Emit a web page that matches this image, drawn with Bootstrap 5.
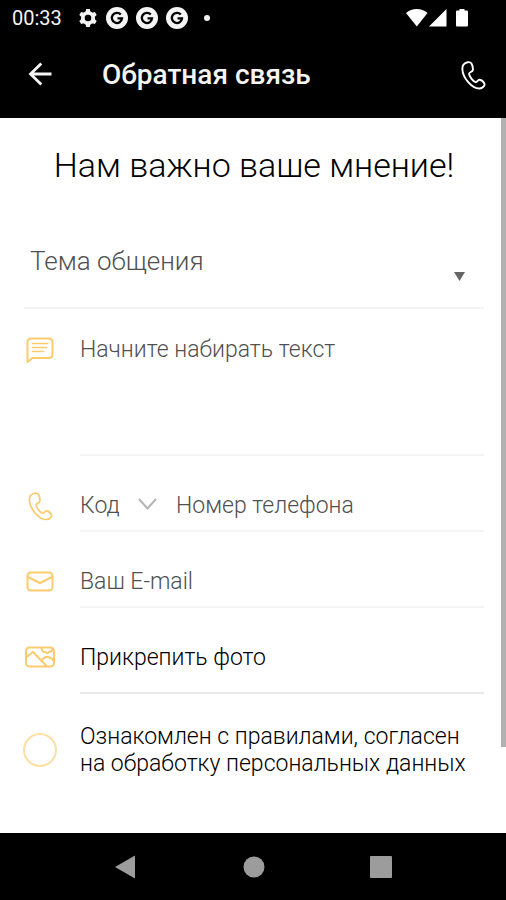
<!DOCTYPE html>
<html lang="ru">
<head>
<meta charset="utf-8">
<meta name="viewport" content="width=device-width, initial-scale=1">
<title>Обратная связь</title>
<link href="https://cdn.jsdelivr.net/npm/bootstrap@5.3.0/dist/css/bootstrap.min.css" rel="stylesheet">
<style>
  body { font-family: Roboto, "Noto Sans", sans-serif; font-size: 23px; font-weight: 300; line-height: 27px; color: #000; background: #fff; }
  svg { display: block; flex: none; }
  .status-bar { height: 36px; padding: 0 37px 0 12px; font-size: 20px; font-weight: 400; color: #f4f4f4; }
  .app-bar { height: 82px; padding: 0 20px 4px 27px; }
  .app-title { font-size: 28px; line-height: 32px; font-weight: 500; color: #f4f4f4; padding-left: 49px; }
  .form-area { padding: 0 22px 40px 24px; }
  .lead-title { font-size: 34px; line-height: 40px; font-weight: 300; padding: 27px 0 30px; }
  .field { border: 0; border-radius: 0; background: transparent; color: #505050; padding: 0; outline-offset: 2px; appearance: none; min-width: 0; font-weight: 300; }
  .field::placeholder { color: #505050; opacity: 1; }
  .topic { border-bottom: 2px solid #f4f4f4; }
  .topic .field { height: 92px; font-size: 26px; padding-left: 6px; }
  .topic-arrow { right: 19px; top: 57px; pointer-events: none; }
  .icon-cell { width: 56px; flex: none; color: #fbcb6c; }
  .line { border-bottom: 2px solid #f4f4f4; padding-top: 24px; }
  .line .field, .attach { height: 50px; }
  .message .line .field { height: 121px; resize: none; display: block; padding-top: 3px; }
  .message .icon-cell { padding-top: 28px; }
  .one-line .icon-cell { padding-top: 24px; }
  .code-box .field { width: 96px; }
  .code-arrow { left: 58px; top: 18px; pointer-events: none; }
  .attach-line { border-color: #eaeaea; padding-bottom: 10px; }
  .attach-icon { padding-bottom: 12px; }
  .consent { padding-top: 29px; }
  .consent-check { appearance: none; width: 34px; height: 34px; border: 2px solid #fddfa6; border-radius: 50%; margin: 0 23px 0 -1px; flex: none; }
  .consent-check:checked { background: #fbcf78; box-shadow: inset 0 0 0 5px #fff; }
  .scroll-thumb { top: 0; right: 0; width: 5px; height: 88%; background: #b1b1b1; }
  .nav-keys { height: 67px; padding: 0 114px 0 115px; }
</style>
<script src="https://cdn.jsdelivr.net/npm/bootstrap@5.3.0/dist/js/bootstrap.bundle.min.js"></script>
</head>
<body class="min-vh-100 d-flex flex-column">
<svg width="0" height="0" class="position-absolute" aria-hidden="true">
  <symbol id="handset" viewBox="0 0 24 29">
    <path d="M2 3.600C4 1.200 8.400.2 9.800 2.300c1.300 2.200 1.800 5.200 1.500 7-.3 1.500-3.600 2-3.700 3.400-.1 2.600 4 7.800 6.400 8.500 1.500.4 2.200-2.500 3.900-2.400 1.900.1 4.200 2.200 5 3.900.8 2-2 4.600-4.800 4.800C10.400 27.900 1.200 16.600.9 8.500.8 6.500 1 4.800 2 3.600z" fill="none" stroke="currentColor" stroke-linejoin="round"/>
  </symbol>
  <symbol id="g-badge" viewBox="0 0 22 22">
    <circle cx="11" cy="11" r="11" fill="#f4f4f4"/>
    <path d="M14.800 7.600A5.100 5.100 0 1 0 16 11.400h-4.500" fill="none" stroke="#000" stroke-width="2.300"/>
  </symbol>
</svg>

<header class="bg-black text-white">
  <div class="status-bar d-flex align-items-center">
    <span>00:33</span>
    <div class="d-flex align-items-center gap-2 ms-3">
      <svg width="20" height="20" viewBox="0 0 20 20" aria-hidden="true"><g fill="#f4f4f4"><path fill-rule="evenodd" d="M10 3a7 7 0 1 0 0 14 7 7 0 0 0 0-14zm0 3.700a3.300 3.300 0 1 1 0 6.600 3.300 3.300 0 0 1 0-6.600z"/><path id="tooth" d="M7.500 4.500 8.200 1h3.600l.7 3.500z"/><use href="#tooth" transform="rotate(60 10 10)"/><use href="#tooth" transform="rotate(120 10 10)"/><use href="#tooth" transform="rotate(180 10 10)"/><use href="#tooth" transform="rotate(240 10 10)"/><use href="#tooth" transform="rotate(300 10 10)"/></g></svg>
      <svg width="22" height="22" aria-hidden="true"><use href="#g-badge"/></svg>
      <svg width="22" height="22" aria-hidden="true"><use href="#g-badge"/></svg>
      <svg width="22" height="22" aria-hidden="true"><use href="#g-badge"/></svg>
      <svg class="ms-2" width="6" height="6" aria-hidden="true"><circle cx="3" cy="3" r="3" fill="#f4f4f4"/></svg>
    </div>
    <svg class="ms-auto" width="63" height="20" viewBox="0 0 63 20" fill="#fff" aria-hidden="true"><path d="M0 5C6-.5 15.500-.5 21.500 5L10.800 18.500zM40.500 1v17.500H23zM50 3.500q0-1 1-1h2.500V1h5v1.500H61q1 0 1 1v14q0 1-1 1H51q-1 0-1-1z"/></svg>
  </div>
  <div class="app-bar d-flex align-items-center">
    <button type="button" class="btn p-0 border-0 text-white" aria-label="Назад">
      <svg width="26" height="26" viewBox="0 0 26 26"><path d="M24.500 12H4M14.300 1.500 3.500 12l10.800 10.500" fill="none" stroke="#f4f4f4" stroke-width="2.800"/></svg>
    </button>
    <h1 class="app-title mb-0">Обратная связь</h1>
    <button type="button" class="btn p-0 border-0 text-white ms-auto" aria-label="Позвонить">
      <svg width="25" height="29" stroke-width="1.900"><use href="#handset"/></svg>
    </button>
  </div>
</header>

<main class="position-relative flex-grow-1">
  <form class="form-area">
    <h2 class="lead-title text-center mb-0 text-black">Нам важно ваше мнение!</h2>

    <div class="topic position-relative">
      <select class="field w-100 d-block" aria-label="Тема общения"><option>Тема общения</option></select>
      <svg class="topic-arrow position-absolute" width="11" height="9" aria-hidden="true"><path d="M0 0h11L5.500 9z" fill="#666"/></svg>
    </div>

    <div class="message d-flex">
      <label class="icon-cell" for="message" aria-label="Текст сообщения">
        <svg width="32" height="27" viewBox="0 0 32 27" fill="none" stroke="currentColor" stroke-width="2" stroke-linecap="round" stroke-linejoin="round"><path d="M3.500 25V5.500q0-4 4-4h17q4 0 4 4v11.500q0 4-4 4H8.500z"/><path d="M8.500 6.500h15M8.500 10.500h14M8.500 14.500h11" stroke-width="1.700"/></svg>
      </label>
      <div class="line flex-grow-1"><textarea class="field w-100" id="message" placeholder="Начните набирать текст"></textarea></div>
    </div>

    <div class="one-line d-flex">
      <label class="icon-cell d-flex align-items-center" for="phone" aria-label="Телефон">
        <svg class="ms-1" width="25" height="29" stroke-width="1.700"><use href="#handset"/></svg>
      </label>
      <div class="line d-flex flex-grow-1">
        <div class="code-box position-relative">
          <select class="field" aria-label="Код"><option>Код</option></select>
          <svg class="code-arrow position-absolute" width="19" height="13" aria-hidden="true"><path d="M1 1l8.500 9.500L18 1" fill="none" stroke="#b4b4b4" stroke-width="2"/></svg>
        </div>
        <input class="field flex-grow-1" id="phone" type="tel" placeholder="Номер телефона">
      </div>
    </div>

    <div class="one-line d-flex">
      <label class="icon-cell d-flex align-items-center" for="email" aria-label="E-mail">
        <svg width="32" height="22" viewBox="0 0 32 22" fill="none" stroke="currentColor" stroke-width="2" stroke-linejoin="round"><rect x="3.500" y="1.500" width="25" height="18" rx="3.500"/><path d="M4 6l12 6 12-6"/></svg>
      </label>
      <div class="line flex-grow-1"><input class="field w-100 d-block" id="email" type="email" placeholder="Ваш E-mail"></div>
    </div>

    <div class="one-line d-flex">
      <div class="icon-cell attach-icon d-flex align-items-center">
        <svg width="32" height="22" viewBox="0 0 32 22" fill="none" stroke="currentColor" stroke-width="2" stroke-linejoin="round" aria-hidden="true"><rect x="2" y="1.500" width="28" height="19" rx="3.500"/><path d="M2 11.500 9 6l13.500 14M17.500 14q4.500-4.500 8-2.500 3.500 1 4.500 4M17.500 2q.5 4.500 4 4 2 2.500 4-.5 3 .5 3-3"/></svg>
      </div>
      <div class="line attach-line flex-grow-1">
        <button type="button" class="field attach w-100 text-start text-black d-block">Прикрепить фото</button>
      </div>
    </div>

    <div class="consent d-flex align-items-center">
      <input class="consent-check" type="checkbox" id="agree">
      <label for="agree">Ознакомлен с правилами, согласен на обработку персональных данных</label>
    </div>
  </form>
  <div class="scroll-thumb position-absolute"></div>
</main>

<footer class="nav-keys bg-black d-flex justify-content-between align-items-center">
  <button type="button" class="btn p-0 border-0" aria-label="Назад"><svg width="22" height="24"><path d="M0 12 20 .5v23z" fill="#9c9c9c"/></svg></button>
  <button type="button" class="btn p-0 border-0" aria-label="Домой"><svg width="22" height="22"><circle cx="11" cy="11" r="10.500" fill="#9c9c9c"/></svg></button>
  <button type="button" class="btn p-0 border-0" aria-label="Недавние"><svg width="22" height="22"><rect width="22" height="22" rx="1" fill="#9c9c9c"/></svg></button>
</footer>
</body>
</html>
